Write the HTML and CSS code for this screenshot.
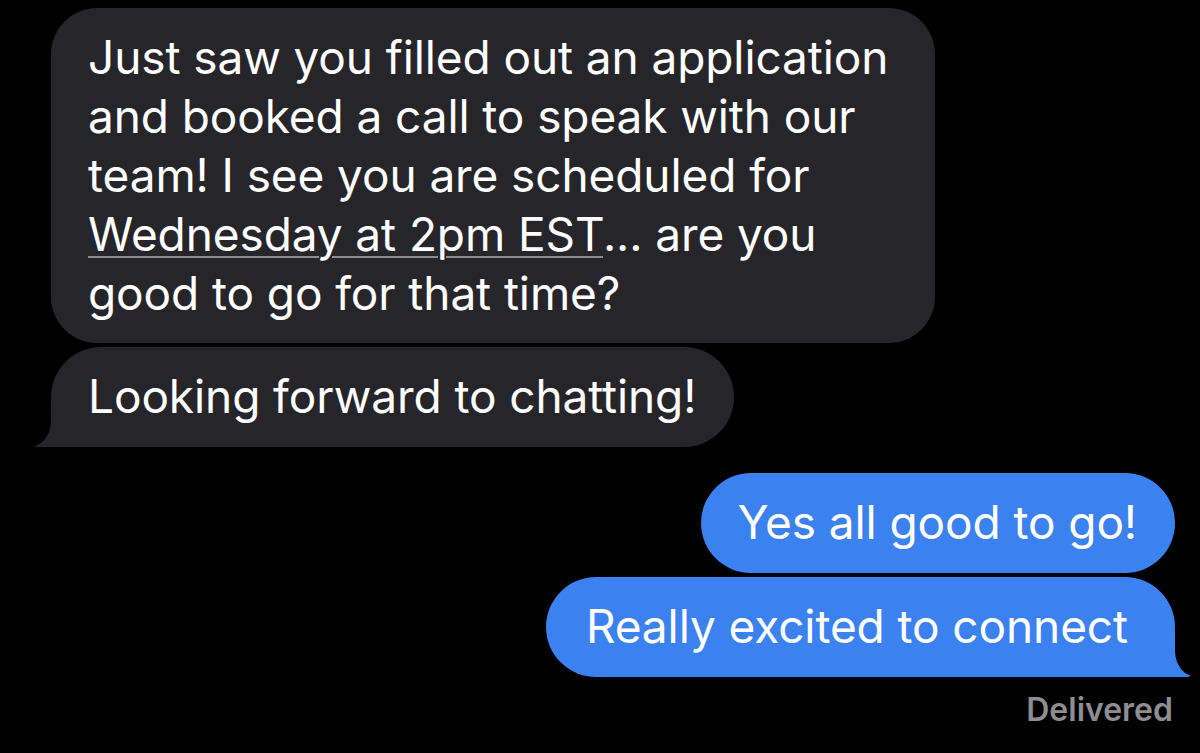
FILE: index.html
```html
<!DOCTYPE html>
<html lang="en">
<head>
<meta charset="utf-8">
<title>Messages</title>
<link rel="stylesheet" href="styles.css">
</head>
<body>
<main class="thread">
  <div class="bubble them first">Just saw you filled out an application<br>and booked a call to speak with our<br>team! I see you are scheduled for<br><span class="link">Wednesday at 2pm EST</span>... are you<br>good to go for that time?</div>
  <div class="bubble them tail">Looking forward to chatting!</div>
  <div class="bubble me gap">Yes all good to go!</div>
  <div class="bubble me tail wide">Really excited to connect</div>
  <div class="status">Delivered</div>
</main>
</body>
</html>
```

FILE: styles.css
```css
html {
  background: #000;
}
body {
  margin: 0;
  font-family: Inter, "Noto Sans", "Liberation Sans", sans-serif;
  color: #fff;
}
.thread {
  display: flex;
  flex-direction: column;
  gap: 4px;
  padding: 8px 25px 0 51px;
}
.bubble {
  position: relative;
  font-size: 46px;
  line-height: 59px;
  padding: 20px 38px 21px 37px;
  border-radius: 50px;
  letter-spacing: -0.1px;
}
.them {
  align-self: flex-start;
  background: #262529;
}
.first {
  border-radius: 46px;
  padding-right: 47px;
  padding-bottom: 20px;
}
.me {
  align-self: flex-end;
  background: #3b82f0;
}
.gap {
  margin-top: 22px;
}
.wide {
  padding-left: 40px;
  padding-right: 47px;
}
.link {
  text-decoration: underline;
  text-decoration-color: #8b8b90;
  text-decoration-thickness: 2px;
  text-underline-offset: 5px;
}
.tail::before,
.tail::after {
  content: "";
  position: absolute;
  bottom: 0;
  z-index: -1;
}
.them.tail::before {
  left: -17px;
  width: 80px;
  height: 46px;
  background: #262529;
  border-bottom-left-radius: 3px;
}
.them.tail::after {
  left: -32px;
  width: 32px;
  height: 46px;
  background: #000;
  border-bottom-right-radius: 22px 26px;
}
.me.tail::before {
  right: -16px;
  width: 80px;
  height: 46px;
  background: #3b82f0;
  border-bottom-right-radius: 3px;
}
.me.tail::after {
  right: -31px;
  width: 31px;
  height: 46px;
  background: #000;
  border-bottom-left-radius: 22px 26px;
}
.status {
  align-self: flex-end;
  margin-top: 11px;
  margin-right: 2px;
  font-size: 32px;
  font-weight: 600;
  color: #8d8d92;
  line-height: 36px;
}
```
